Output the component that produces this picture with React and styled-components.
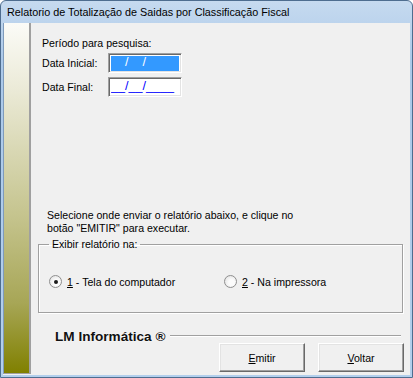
import React from 'react'
import styled, { createGlobalStyle } from 'styled-components'

const GlobalStyle = createGlobalStyle`
  html, body {
    margin: 0;
    padding: 0;
    background: #fff;
  }
  body {
    font-family: "Liberation Sans", Arial, sans-serif;
    font-size: 10.6px;
    color: #000;
  }
`

const Window = styled.div`
  width: 413px;
  height: 378px;
  box-sizing: border-box;
  display: flex;
  flex-direction: column;
  border: 1px solid #4e6d8f;
  border-radius: 6px 6px 0 0;
  background: linear-gradient(#c6daef, #abc9e9 60px, #b3cfec);
  padding: 0 2px 2px 2px;
  overflow: hidden;
`

const TitleBar = styled.div`
  height: 22px;
  display: flex;
  align-items: center;
  padding-left: 4px;
  font-size: 10.8px;
  color: #000;
`

const Client = styled.div`
  flex: 1;
  display: flex;
  background: #f0f0f0;
`

const SideStrip = styled.div`
  width: 25px;
  margin-bottom: 1px;
  border-left: 1px solid #7f9bbb;
  border-right: 2px solid #a0a0a0;
  border-bottom: 1px solid #a0a0a0;
  background: linear-gradient(#fbfbf7 0%, #ecebd9 18%, #c5c48e 55%, #a7a656 80%, #808000 100%);
`

const Content = styled.div`
  flex: 1;
  display: flex;
  flex-direction: column;
  padding: 14px 6px 3px 11px;
`

const Text = styled.div`
  line-height: 13px;
  margin-left: ${p => p.indent || 0}px;
  margin-top: ${p => p.top || 0}px;
  white-space: nowrap;
`

const FieldRow = styled.div`
  display: flex;
  align-items: center;
  height: 20px;
  margin-top: ${p => p.top}px;
`

const Label = styled.span`
  width: 66px;
`

const DateBox = styled.div`
  width: 74px;
  height: 20px;
  box-sizing: border-box;
  border: 1px solid;
  border-color: #a0a0a0 #fff #fff #a0a0a0;
  box-shadow: inset 1px 1px #696969, inset -1px -1px #e3e3e3;
  background: #fff;
  padding: 2px;
  display: flex;
  overflow: hidden;
`

const Mask = styled.span`
  display: block;
  width: 100%;
  height: 15px;
  line-height: 13px;
  font-size: 12.6px;
  color: ${p => (p.selected ? '#fff' : '#0000ff')};
  background: ${p => (p.selected ? '#3399ff' : 'transparent')};
  white-space: nowrap;
  overflow: hidden;
`

const Blank = styled.span`
  color: ${p => (p.selected ? '#3399ff' : 'inherit')};
`

const Group = styled.fieldset`
  margin: 3px 0 0 -4px;
  width: 365px;
  height: 75px;
  box-sizing: border-box;
  padding: 0 0 0 10px;
  border: 1px solid #a0a0a0;
  box-shadow: 1px 1px #fff, inset 1px 1px #fff;
`

const Legend = styled.legend`
  padding: 0 3px;
  line-height: 13px;
`

const RadioRow = styled.div`
  display: flex;
  align-items: center;
  margin-top: 24px;
`

const RadioItem = styled.label`
  display: flex;
  align-items: center;
  width: ${p => p.width}px;
`

const RadioCircle = styled.span`
  width: 11px;
  height: 11px;
  border-radius: 50%;
  border: 1px solid #8f8f8f;
  background: radial-gradient(circle at 60% 60%, #fcfcfc 30%, #dcdcdc 100%);
  display: flex;
  align-items: center;
  justify-content: center;
  margin-right: 5px;
  &::after {
    content: '';
    width: 4px;
    height: 4px;
    border-radius: 50%;
    background: ${p => (p.checked ? '#1b1b1b' : 'transparent')};
  }
`

const Footer = styled.div`
  margin-top: auto;
  display: flex;
  flex-direction: column;
`

const BrandRow = styled.div`
  display: flex;
  align-items: center;
  height: 14px;
  padding-left: 13px;
`

const Brand = styled.span`
  font-weight: bold;
  font-size: 13.6px;
  color: #111;
  text-shadow: 0 0 2px #fff;
  white-space: nowrap;
`

const Rule = styled.div`
  flex: 1;
  margin: 0 3px 0 5px;
  height: 1px;
  background: #a0a0a0;
  border-bottom: 1px solid #fff;
`

const Buttons = styled.div`
  display: flex;
  justify-content: flex-end;
  gap: 13px;
`

const Button = styled.button`
  width: 86px;
  height: 29px;
  box-sizing: border-box;
  border: 1px solid;
  border-color: #fff #696969 #696969 #fff;
  box-shadow: inset -1px -1px #a0a0a0, inset 1px 1px #e3e3e3;
  background: #f0f0f0;
  font-family: "Liberation Sans", Arial, sans-serif;
  font-size: 10.6px;
  color: #000;
  padding: 0;
`

const Key = styled.u`
  text-underline-offset: 1px;
`

export default function App() {
  return (
    <>
      <GlobalStyle />
      <Window>
        <TitleBar>Relatorio de Totalização de Saidas por Classificação Fiscal</TitleBar>
        <Client>
          <SideStrip />
          <Content>
            <Text>Período para pesquisa:</Text>
            <FieldRow top={3}>
              <Label>Data Inicial:</Label>
              <DateBox>
                <Mask selected>
                  <Blank selected>__</Blank>/<Blank selected>__</Blank>/<Blank selected>____</Blank>
                </Mask>
              </DateBox>
            </FieldRow>
            <FieldRow top={4}>
              <Label>Data Final:</Label>
              <DateBox>
                <Mask>__/__/____</Mask>
              </DateBox>
            </FieldRow>
            <Text indent={5} top={112}>
              Selecione onde enviar o relatório abaixo, e clique no
            </Text>
            <Text indent={5}>botão "EMITIR" para executar.</Text>
            <Group>
              <Legend>Exibir relatório na:</Legend>
              <RadioRow>
                <RadioItem width={175}>
                  <RadioCircle checked />
                  <span><Key>1</Key> - Tela do computador</span>
                </RadioItem>
                <RadioItem width={150}>
                  <RadioCircle />
                  <span><Key>2</Key> - Na impressora</span>
                </RadioItem>
              </RadioRow>
            </Group>
            <Footer>
              <BrandRow>
                <Brand>LM Informática ®</Brand>
                <Rule />
              </BrandRow>
              <Buttons>
                <Button><Key>E</Key>mitir</Button>
                <Button><Key>V</Key>oltar</Button>
              </Buttons>
            </Footer>
          </Content>
        </Client>
      </Window>
    </>
  )
}
